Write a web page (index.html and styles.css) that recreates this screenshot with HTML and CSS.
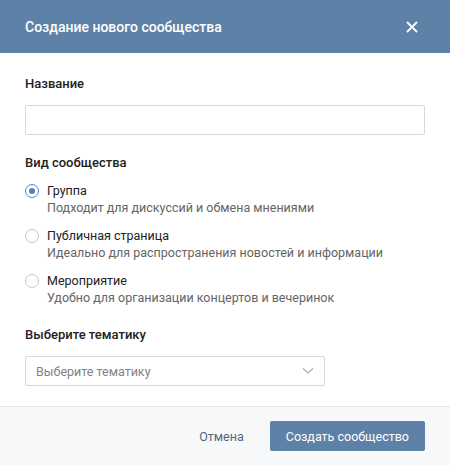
FILE: index.html
```html
<!DOCTYPE html>
<html lang="ru">
<head>
  <meta charset="UTF-8" />
  <title>Создание нового сообщества</title>
  <link rel="stylesheet" href="styles.css">
</head>
<body>
  <div class="box">
    <div class="box-title">
      <span>Создание нового сообщества</span>
      <svg class="close" width="12" height="12" viewBox="0 0 12 12">
        <path d="M1.5 1.5 L10.5 10.5 M10.5 1.5 L1.5 10.5" stroke="#fff" stroke-width="1.8" stroke-linecap="round"/>
      </svg>
    </div>

    <div class="box-body">
      <div class="label">Название</div>
      <input class="text-input" type="text" />

      <div class="label type-label">Вид сообщества</div>
      <div class="radios">
        <div class="radio checked">
          <span class="dot"></span>
          <div>
            <div class="radio-title">Группа</div>
            <div class="radio-sub">Подходит для дискуссий и обмена мнениями</div>
          </div>
        </div>
        <div class="radio">
          <span class="dot"></span>
          <div>
            <div class="radio-title">Публичная страница</div>
            <div class="radio-sub">Идеально для распространения новостей и информации</div>
          </div>
        </div>
        <div class="radio">
          <span class="dot"></span>
          <div>
            <div class="radio-title">Мероприятие</div>
            <div class="radio-sub">Удобно для организации концертов и вечеринок</div>
          </div>
        </div>
      </div>

      <div class="label theme-label">Выберите тематику</div>
      <div class="select">
        <span>Выберите тематику</span>
        <svg width="12" height="8" viewBox="0 0 12 8">
          <path d="M1 1.5 L6 6 L11 1.5" fill="none" stroke="#a5b2c0" stroke-width="1.3"/>
        </svg>
      </div>
    </div>

    <div class="box-controls">
      <span class="cancel">Отмена</span>
      <button class="btn">Создать сообщество</button>
    </div>
  </div>
</body>
</html>
```

FILE: styles.css
```css
body {
  margin: 0;
  font-family: Roboto, "Open Sans", sans-serif;
  font-size: 12.5px;
  color: #222;
  background: #fff;
}
.box { width: 450px; }
.box-title {
  height: 53px;
  background: #5e81a8;
  color: #fff;
  font-size: 14px;
  font-weight: 500;
  padding: 0 25px;
  display: flex;
  align-items: center;
  justify-content: space-between;
}
.close { margin-right: 7px; }
.box-body {
  padding: 22px 25px 20px;
  border-bottom: 1px solid #e7e8ec;
}
.label {
  font-size: 13px;
  font-weight: 500;
  line-height: 18px;
}
.text-input {
  display: block;
  box-sizing: border-box;
  width: 400px;
  height: 30px;
  margin-top: 12px;
  border: 1px solid #d3d9de;
  border-radius: 2px;
  padding: 0 10px;
  font: inherit;
}
.type-label { margin-top: 19px; }
.radios { margin-top: 10px; }
.radio {
  display: flex;
  gap: 8px;
  margin-bottom: 10px;
}
.dot {
  width: 12px;
  height: 12px;
  margin-top: 2px;
  border: 1px solid #c1c9d1;
  border-radius: 50%;
  flex: none;
  position: relative;
}
.checked .dot { border-color: #5181b8; }
.checked .dot::after {
  content: "";
  position: absolute;
  left: 3px;
  top: 3px;
  width: 6px;
  height: 6px;
  border-radius: 50%;
  background: #5181b8;
}
.radio-title { line-height: 17px; }
.radio-sub {
  color: #656565;
  line-height: 18px;
}
.theme-label { margin-top: 19px; }
.select {
  box-sizing: border-box;
  width: 300px;
  height: 30px;
  margin-top: 12px;
  border: 1px solid #d3d9de;
  border-radius: 2px;
  padding: 0 10px;
  display: flex;
  align-items: center;
  justify-content: space-between;
  color: #828282;
}
.box-controls {
  background: #f7f8fa;
  height: 58px;
  padding: 0 25px;
  display: flex;
  align-items: center;
  justify-content: flex-end;
  gap: 26px;
}
.cancel { color: #55677d; }
.btn {
  font: inherit;
  color: #fff;
  background: #5e81a8;
  border: none;
  border-radius: 2px;
  height: 30px;
  padding: 0 16px;
}
```
